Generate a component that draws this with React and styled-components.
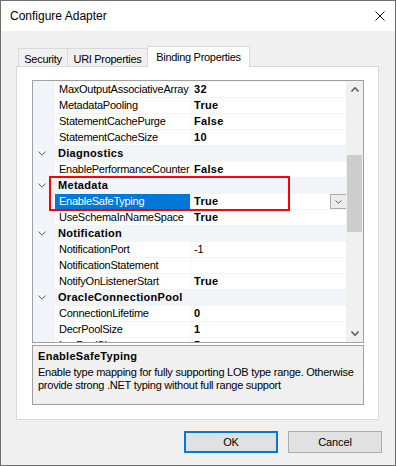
import React from "react";
import styled, { createGlobalStyle } from "styled-components";

const Global = createGlobalStyle`
  html, body { margin: 0; padding: 0; background: #fff; }
  * { box-sizing: border-box; }
`;

const Window = styled.div`
  width: 396px;
  height: 466px;
  border: 1px solid #6e6e6e;
  background: #f0f0f0;
  display: flex;
  flex-direction: column;
  font-family: "Liberation Sans", Arial, sans-serif;
  color: #000;
  overflow: hidden;
`;

const TitleBar = styled.div`
  height: 30px;
  flex: none;
  background: #fff;
  display: flex;
  align-items: center;
  justify-content: space-between;
  padding: 0 10px 0 9px;
  font-size: 12px;
`;

const Client = styled.div`
  flex: 1;
  display: flex;
  flex-direction: column;
  padding: 15px 13px 0 15px;
`;

const TabStrip = styled.div`
  display: flex;
  align-items: flex-end;
  height: 21px;
  margin: 0 0 -1px 2px;
  position: relative;
  z-index: 1;
`;

const Tab = styled.div`
  width: ${(p) => p.$w}px;
  height: ${(p) => (p.$active ? 21 : 18)}px;
  margin-bottom: ${(p) => (p.$active ? 0 : 1)}px;
  margin-left: ${(p) => (p.$first ? 0 : -1)}px;
  border: 1px solid #d9d9d9;
  border-bottom: none;
  background: ${(p) => (p.$active ? "#fff" : "#f0f0f0")};
  display: flex;
  align-items: center;
  justify-content: center;
  padding-top: ${(p) => (p.$active ? 0 : 2)}px;
  font-size: 11px;
  letter-spacing: -0.3px;
  white-space: nowrap;
`;

const Panel = styled.div`
  width: 363px;
  height: 354px;
  border: 1px solid #d9d9d9;
  background: #fff;
  padding: 13px 14px 0 15px;
  display: flex;
  flex-direction: column;
`;

const Grid = styled.div`
  width: 332px;
  height: 263px;
  border: 1px solid #a0a0a0;
  background: #fff;
  display: flex;
  position: relative;
`;

const Rows = styled.div`
  flex: 1;
  padding-top: 1px;
  background: #f1f4f9;
  overflow: hidden;
  display: flex;
  flex-direction: column;
  gap: 1px;
`;

const PropRow = styled.div`
  flex: none;
  height: 15px;
  display: grid;
  grid-template-columns: 21px 135px 156px;
  column-gap: 1px;
  font-size: 11px;
  line-height: 15px;
`;

const Gutter = styled.div`
  display: flex;
  align-items: center;
  padding-left: 5px;
`;

const NameCell = styled.div`
  background: ${(p) => (p.$selected ? "#0078d7" : "#fff")};
  color: ${(p) => (p.$selected ? "#fff" : "#000")};
  padding-left: 4px;
  letter-spacing: -0.25px;
  white-space: nowrap;
  overflow: hidden;
`;

const ValueCell = styled.div`
  background: #fff;
  display: flex;
  align-items: stretch;
  padding-left: 3px;
  white-space: nowrap;
  overflow: hidden;
`;

const ValueText = styled.span`
  flex: 1;
  font-weight: ${(p) => (p.$bold ? 700 : 400)};
  letter-spacing: ${(p) => (p.$bold ? "0.3px" : "-0.25px")};
`;

const DropButton = styled.div`
  width: 17px;
  height: 15px;
  border: 1px solid #adadad;
  background: #ececec;
  display: flex;
  align-items: center;
  justify-content: center;
`;

const CategoryRow = styled.div`
  flex: none;
  height: 15px;
  display: grid;
  grid-template-columns: 21px 1fr;
  font-size: 11px;
  line-height: 15px;
  font-weight: 700;
`;

const CategoryName = styled.div`
  padding-left: 4px;
  letter-spacing: 0.3px;
  white-space: nowrap;
`;

const ScrollBar = styled.div`
  width: 17px;
  flex: none;
  background: #f0f0f0;
  display: flex;
  flex-direction: column;
`;

const ScrollArrow = styled.div`
  height: 17px;
  flex: none;
  display: flex;
  align-items: center;
  justify-content: center;
`;

const Track = styled.div`
  flex: 1;
  padding: 57px 1px 0 1px;
`;

const Thumb = styled.div`
  height: 77px;
  background: #cdcdcd;
`;

const Highlight = styled.div`
  position: absolute;
  left: 16px;
  top: 95px;
  width: 241px;
  height: 35px;
  border: 2px solid #ff0000;
  pointer-events: none;
`;

const Help = styled.div`
  margin-top: 2px;
  width: 332px;
  height: 60px;
  border: 1px solid #a0a0a0;
  background: #f0f0f0;
  padding: 4px 5px 0 5px;
  font-size: 11px;
  line-height: 13px;
`;

const HelpTitle = styled.div`
  font-weight: 700;
  letter-spacing: 0.3px;
`;

const HelpText = styled.div`
  margin-top: 3px;
  letter-spacing: -0.25px;
  white-space: nowrap;
`;

const ButtonRow = styled.div`
  margin-top: 11px;
  display: flex;
  justify-content: flex-end;
  gap: 10px;
`;

const Button = styled.div`
  width: 94px;
  height: 22px;
  border: ${(p) => (p.$default ? "2px solid #0078d7" : "1px solid #adadad")};
  background: #e1e1e1;
  display: flex;
  align-items: center;
  justify-content: center;
  font-size: 11px;
  letter-spacing: -0.1px;
`;

const Chevron = ({ dir = "down", w = 8, h = 5, color = "#606060", sw = 1 }) => (
  <svg width={w} height={h} viewBox={`0 0 ${w} ${h}`} style={{ display: "block" }}>
    <polyline
      points={
        dir === "down"
          ? `0.5,0.5 ${w / 2},${h - 0.8} ${w - 0.5},0.5`
          : `0.5,${h - 0.5} ${w / 2},0.8 ${w - 0.5},${h - 0.5}`
      }
      fill="none"
      stroke={color}
      strokeWidth={sw}
    />
  </svg>
);

const rows = [
  { name: "MaxOutputAssociativeArray", value: "32", bold: true },
  { name: "MetadataPooling", value: "True", bold: true },
  { name: "StatementCachePurge", value: "False", bold: true },
  { name: "StatementCacheSize", value: "10", bold: true },
  { cat: "Diagnostics" },
  { name: "EnablePerformanceCounter", value: "False", bold: true },
  { cat: "Metadata" },
  { name: "EnableSafeTyping", value: "True", bold: true, selected: true },
  { name: "UseSchemaInNameSpace", value: "True", bold: true },
  { cat: "Notification" },
  { name: "NotificationPort", value: "-1" },
  { name: "NotificationStatement", value: "" },
  { name: "NotifyOnListenerStart", value: "True", bold: true },
  { cat: "OracleConnectionPool" },
  { name: "ConnectionLifetime", value: "0", bold: true },
  { name: "DecrPoolSize", value: "1", bold: true },
  { name: "IncrPoolSize", value: "5", bold: true },
];

export default function App() {
  return (
    <>
      <Global />
      <Window>
        <TitleBar>
          <span>Configure Adapter</span>
          <svg width="10" height="10" viewBox="0 0 10 10">
            <path d="M0.5 0.5 L9.5 9.5 M9.5 0.5 L0.5 9.5" stroke="#111" strokeWidth="1" />
          </svg>
        </TitleBar>
        <Client>
          <TabStrip>
            <Tab $first $w={50}>Security</Tab>
            <Tab $w={81}>URI Properties</Tab>
            <Tab $active $w={103}>Binding Properties</Tab>
          </TabStrip>
          <Panel>
            <Grid>
              <Rows>
                {rows.map((r, i) =>
                  r.cat ? (
                    <CategoryRow key={i}>
                      <Gutter>
                        <Chevron w={8} h={5} />
                      </Gutter>
                      <CategoryName>{r.cat}</CategoryName>
                    </CategoryRow>
                  ) : (
                    <PropRow key={i}>
                      <Gutter />
                      <NameCell $selected={r.selected}>{r.name}</NameCell>
                      <ValueCell>
                        <ValueText $bold={r.bold}>{r.value}</ValueText>
                        {r.selected && (
                          <DropButton>
                            <Chevron w={7} h={4} />
                          </DropButton>
                        )}
                      </ValueCell>
                    </PropRow>
                  )
                )}
              </Rows>
              <ScrollBar>
                <ScrollArrow>
                  <Chevron dir="up" w={8} h={5} sw={1.6} />
                </ScrollArrow>
                <Track>
                  <Thumb />
                </Track>
                <ScrollArrow>
                  <Chevron dir="down" w={8} h={5} sw={1.6} />
                </ScrollArrow>
              </ScrollBar>
              <Highlight />
            </Grid>
            <Help>
              <HelpTitle>EnableSafeTyping</HelpTitle>
              <HelpText>
                Enable type mapping for fully supporting LOB type range. Otherwise
                <br />
                provide strong .NET typing without full range support
              </HelpText>
            </Help>
          </Panel>
          <ButtonRow>
            <Button $default>OK</Button>
            <Button>Cancel</Button>
          </ButtonRow>
        </Client>
      </Window>
    </>
  );
}
